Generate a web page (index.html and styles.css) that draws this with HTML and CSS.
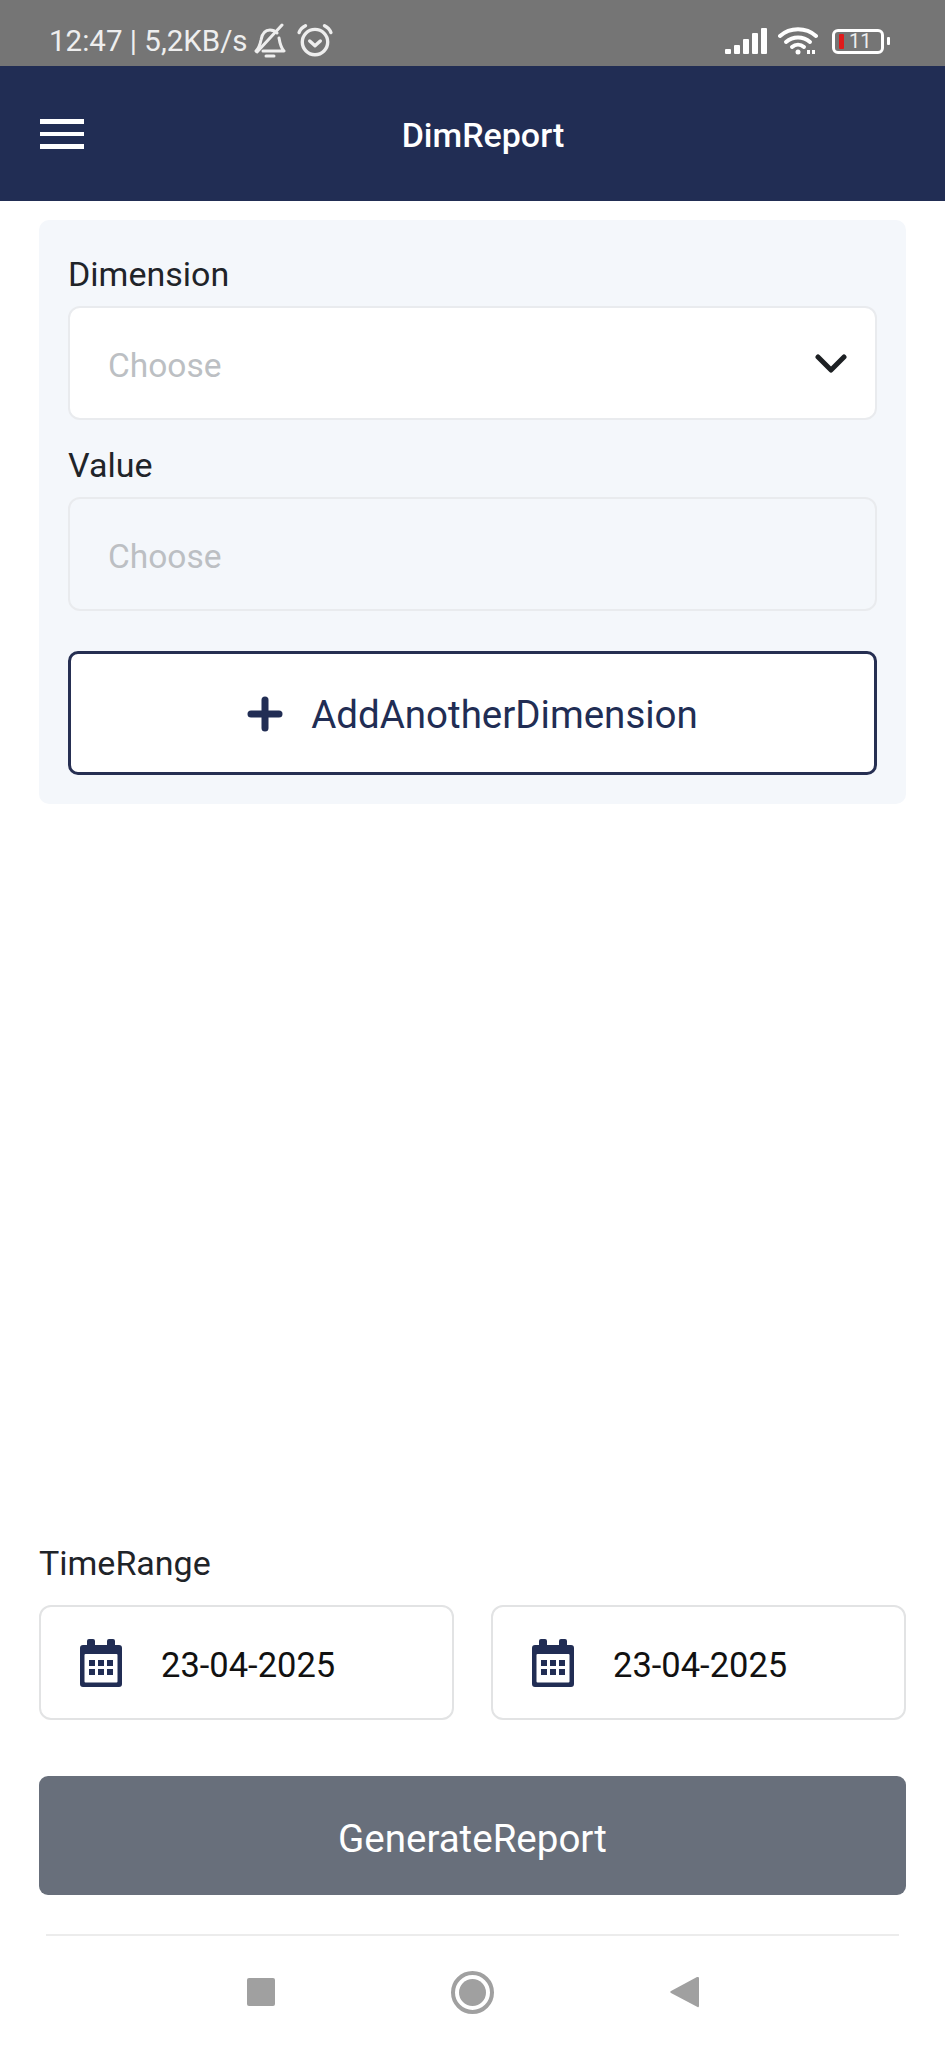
FILE: index.html
```html
<!DOCTYPE html>
<html lang="en">

<head>
    <meta charset="UTF-8">
    <meta name="viewport" content="width=device-width, initial-scale=1.0">
    <title>DimReport</title>

    <link rel="stylesheet" href="styles.css">
</head>

<body>

    <!-- Phone status bar -->
    <div class="status-bar">
        <div class="status-left">
            <span class="status-text">12:47 | 5,2KB/s</span>
            <svg class="icon-bell" viewBox="0 0 32 36" fill="none" stroke="#eee" stroke-width="3" stroke-linecap="round" stroke-linejoin="round">
                <path d="M2 28c3-3 4-6 5-11 1-6 4-10 9-10 3 0 5 1 7 3"/>
                <path d="M25 15c1 6 2 10 5 13H9"/>
                <path d="M28 2 3 29"/>
                <path d="M12 33h8"/>
            </svg>
            <svg class="icon-alarm" viewBox="0 0 34 34" fill="none" stroke="#eee" stroke-width="3.2" stroke-linecap="round" stroke-linejoin="round">
                <circle cx="17" cy="18" r="12"/>
                <path d="M12 17l5 4.500 5-4.500"/>
                <path d="M2 9c1-3 3-5 6-6.500"/>
                <path d="M32 9c-1-3-3-5-6-6.500"/>
            </svg>
        </div>
        <div class="status-right">
            <div class="signal">
                <span class="signal-bar bar-1"></span>
                <span class="signal-bar bar-2"></span>
                <span class="signal-bar bar-3"></span>
                <span class="signal-bar bar-4"></span>
                <span class="signal-bar bar-5"></span>
            </div>
            <svg class="icon-wifi" viewBox="0 0 40 28" fill="none" stroke="#fff" stroke-width="4" stroke-linecap="round">
                <path d="M2 9c10-9 26-9 36 0"/>
                <path d="M8 15c7-6 17-6 24 0"/>
                <path d="M14 20c3.500-3 8.500-3 12 0"/>
                <circle cx="20" cy="25" r="2.500" fill="#fff" stroke="none"/>
                <path d="M29 25h9" stroke-width="4" stroke-dasharray="3 2" stroke-linecap="butt"/>
            </svg>
            <div class="battery">
                <div class="battery-body">
                    <span class="battery-level"></span>
                    <span class="battery-text">11</span>
                </div>
                <span class="battery-nub"></span>
            </div>
        </div>
    </div>

    <!-- App header -->
    <div class="app-header">
        <button class="menu-button" type="button">
            <span class="menu-line"></span>
            <span class="menu-line"></span>
            <span class="menu-line"></span>
        </button>
        <h1 class="page-title">DimReport</h1>
    </div>

    <div class="content">
        <!-- Dimension filters -->
        <div class="filter-panel">
            <label class="field-label">Dimension</label>
            <div class="select-box">
                <span class="placeholder">Choose</span>
                <svg class="icon-chevron" viewBox="0 0 32 20" fill="none" stroke="#1d2023" stroke-width="5" stroke-linecap="round" stroke-linejoin="round">
                    <path d="M3 3l13 13L29 3"/>
                </svg>
            </div>

            <label class="field-label value-label">Value</label>
            <div class="select-box disabled">
                <span class="placeholder">Choose</span>
            </div>

            <button class="add-button" type="button">
                <svg class="icon-plus" viewBox="0 0 36 36" fill="none" stroke="#212d54" stroke-width="7" stroke-linecap="round">
                    <path d="M18 4v28"/>
                    <path d="M4 18h28"/>
                </svg>
                <span>AddAnotherDimension</span>
            </button>
        </div>

        <!-- Time range and submit -->
        <div class="footer-form">
            <label class="field-label">TimeRange</label>
            <div class="date-row">
                <div class="date-box">
                    <svg class="icon-calendar" viewBox="0 0 42 48">
                        <path fill="#212d54" d="M9 0h4a2 2 0 0 1 2 2v4h12V2a2 2 0 0 1 2-2h4a2 2 0 0 1 2 2v4h4a3 3 0 0 1 3 3v36a3 3 0 0 1-3 3H3a3 3 0 0 1-3-3V9a3 3 0 0 1 3-3h4V2a2 2 0 0 1 2-2z"/>
                        <rect x="4.500" y="15" width="33" height="28.500" rx="1" fill="#fff"/>
                        <path fill="#212d54" d="M9 21h6v6H9zM18 21h6v6h-6zM27 21h6v6h-6zM9 30h6v6H9zM18 30h6v6h-6zM27 30h6v6h-6z"/>
                    </svg>
                    <span class="date-text">23-04-2025</span>
                </div>
                <div class="date-box">
                    <svg class="icon-calendar" viewBox="0 0 42 48">
                        <path fill="#212d54" d="M9 0h4a2 2 0 0 1 2 2v4h12V2a2 2 0 0 1 2-2h4a2 2 0 0 1 2 2v4h4a3 3 0 0 1 3 3v36a3 3 0 0 1-3 3H3a3 3 0 0 1-3-3V9a3 3 0 0 1 3-3h4V2a2 2 0 0 1 2-2z"/>
                        <rect x="4.500" y="15" width="33" height="28.500" rx="1" fill="#fff"/>
                        <path fill="#212d54" d="M9 21h6v6H9zM18 21h6v6h-6zM27 21h6v6h-6zM9 30h6v6H9zM18 30h6v6h-6zM27 30h6v6h-6z"/>
                    </svg>
                    <span class="date-text">23-04-2025</span>
                </div>
            </div>
            <button class="generate-button" type="button">GenerateReport</button>
        </div>
    </div>

    <!-- Android navigation -->
    <div class="nav-bar">
        <span class="nav-square"></span>
        <span class="nav-circle"></span>
        <svg class="nav-back" viewBox="0 0 29 32">
            <path fill="#a0a0a0" d="M28 1a1 1 0 0 1 1 1v28a1 1 0 0 1-1.500 1L1 17a1.200 1.200 0 0 1 0-2L27 1z"/>
        </svg>
    </div>

</body>

</html>
```

FILE: styles.css
```css
* {
    box-sizing: border-box;
}

body {
    margin: 0;
    width: 945px;
    height: 2048px;
    display: flex;
    flex-direction: column;
    background-color: #fff;
    font-family: Roboto, "Liberation Sans", sans-serif;
    color: #1f2429;
}

/* Status bar */
.status-bar {
    height: 66px;
    flex-shrink: 0;
    display: flex;
    justify-content: space-between;
    align-items: center;
    padding: 16px 55px 0 49px;
    background-color: #757575;
}

.status-left,
.status-right {
    display: flex;
    align-items: center;
}

.status-text {
    font-size: 29.500px;
    line-height: 34px;
    color: #eee;
}

.icon-bell {
    width: 32px;
    height: 36px;
    margin-left: 6px;
}

.icon-alarm {
    width: 36px;
    height: 36px;
    margin-left: 11px;
}

.signal {
    display: flex;
    align-items: flex-end;
    gap: 3px;
    height: 26px;
}

.signal-bar {
    width: 6px;
    background-color: #fff;
    border-radius: 1px;
}

.bar-1 { height: 5px; }
.bar-2 { height: 9px; }
.bar-3 { height: 15px; }
.bar-4 { height: 21px; }
.bar-5 { height: 26px; }

.icon-wifi {
    width: 40px;
    height: 28px;
    margin-left: 11px;
}

.battery {
    display: flex;
    align-items: center;
    margin-left: 14px;
}

.battery-body {
    width: 52px;
    height: 25px;
    display: flex;
    align-items: center;
    padding-left: 4px;
    border: 3px solid #fff;
    border-radius: 6px;
}

.battery-level {
    width: 5px;
    height: 15px;
    background-color: #e01a1a;
    border-radius: 1px;
}

.battery-text {
    margin-left: 5px;
    font-size: 20px;
    line-height: 19px;
    color: #eee;
}

.battery-nub {
    width: 3px;
    height: 8px;
    margin-left: 3px;
    background-color: #fff;
    border-radius: 1px;
}

/* App header */
.app-header {
    height: 135px;
    flex-shrink: 0;
    position: relative;
    display: flex;
    justify-content: center;
    align-items: center;
    padding: 3px 0 0 21px;
    background-color: #212d54;
}

.menu-button {
    position: absolute;
    left: 40px;
    top: 53px;
    width: 44px;
    display: flex;
    flex-direction: column;
    gap: 8px;
    padding: 0;
    border: none;
    background: none;
}

.menu-line {
    height: 4.500px;
    background-color: #fff;
}

.page-title {
    margin: 0;
    font-size: 34px;
    font-weight: 500;
    color: #fff;
}

/* Main area */
.content {
    flex: 1;
    display: flex;
    flex-direction: column;
    padding: 19px 39px 39px;
}

.filter-panel {
    display: flex;
    flex-direction: column;
    padding: 34px 29px 29px;
    background-color: #f4f7fb;
    border-radius: 10px;
}

.field-label {
    font-size: 34px;
    line-height: 40px;
    margin-bottom: 12px;
}

.value-label {
    margin-top: 25px;
}

.select-box {
    height: 114px;
    display: flex;
    justify-content: space-between;
    align-items: center;
    padding: 5px 27px 0 38px;
    background-color: #fff;
    border: 2px solid #e9ebee;
    border-radius: 12px;
}

.select-box.disabled {
    background-color: #f4f7fb;
}

.placeholder {
    font-size: 33.500px;
    color: #bcbfc3;
}

.icon-chevron {
    width: 34px;
    height: 20px;
    margin-top: -3px;
}

.add-button {
    height: 124px;
    margin-top: 40px;
    display: flex;
    justify-content: center;
    align-items: center;
    gap: 28px;
    padding-top: 3px;
    background-color: #fff;
    border: 3px solid #262f52;
    border-radius: 10px;
    font-family: inherit;
    font-size: 38.500px;
    color: #212d54;
}

.icon-plus {
    width: 36px;
    height: 36px;
}

/* Time range and submit */
.footer-form {
    margin-top: auto;
    display: flex;
    flex-direction: column;
}

.footer-form .field-label {
    margin-bottom: 22px;
}

.date-row {
    display: grid;
    grid-template-columns: 1fr 1fr;
    gap: 37px;
}

.date-box {
    height: 115px;
    display: flex;
    align-items: center;
    gap: 39px;
    padding-left: 39px;
    border: 2px solid #e2e3e4;
    border-radius: 12px;
}

.icon-calendar {
    width: 42px;
    height: 48px;
}

.date-text {
    padding-top: 5px;
    font-size: 34.500px;
    color: #111;
}

.generate-button {
    height: 119px;
    margin-top: 56px;
    padding-top: 7px;
    border: none;
    border-radius: 9px;
    background-color: #686f7b;
    font-family: inherit;
    font-size: 38.500px;
    color: #fff;
}

/* Android navigation */
.nav-bar {
    height: 114px;
    flex-shrink: 0;
    display: flex;
    justify-content: center;
    align-items: center;
    gap: 176px;
    margin: 0 46px;
    border-top: 2px solid #ececec;
}

.nav-square {
    width: 28px;
    height: 28px;
    background-color: #a0a0a0;
    border-radius: 2px;
}

.nav-circle {
    width: 43px;
    height: 43px;
    padding: 4px;
    border: 4px solid #a0a0a0;
    border-radius: 50%;
    background-color: #a0a0a0;
    background-clip: content-box;
}

.nav-back {
    width: 29px;
    height: 32px;
}
```
